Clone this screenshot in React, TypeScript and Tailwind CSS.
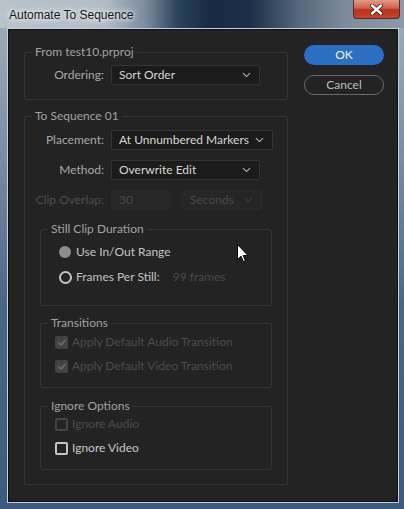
import React from "react";

const font = { fontFamily: 'Lato, "Open Sans", sans-serif' };

function Chevron({ dim }: { dim?: boolean }) {
  return (
    <svg width="9" height="6" viewBox="0 0 9 6" fill="none">
      <path d="M1 1.2 L4.5 4.6 L8 1.2" stroke={dim ? "#3e3e3e" : "#b8b8b8"} strokeWidth="1.1" />
    </svg>
  );
}

function Dropdown({ value, width, dim }: { value: string; width: string; dim?: boolean }) {
  return (
    <div
      className={`flex h-[20px] items-center justify-between whitespace-nowrap rounded-[2px] border pl-[7px] pr-[8px] ${width} ${
        dim ? "border-[#2b2b2b] bg-[#262626] text-[#4a4a4a]" : "border-[#343434] bg-[#1b1b1b] text-[#d6d6d6]"
      }`}
    >
      <span>{value}</span>
      <Chevron dim={dim} />
    </div>
  );
}

function Legend({ children }: { children: React.ReactNode }) {
  return <legend className="ml-[7px] h-4 px-[3px] leading-4 text-[#a2a2a2]">{children}</legend>;
}

function Checkbox({ checked, disabled, label }: { checked?: boolean; disabled?: boolean; label: string }) {
  return (
    <div className="flex h-6 items-center">
      <div
        className={`flex h-[13px] w-[13px] items-center justify-center rounded-[2px] ${
          checked ? "bg-[#434343]" : disabled ? "border-2 border-[#444]" : "border-2 border-[#c4c4c4]"
        }`}
      >
        {checked && (
          <svg width="10" height="9" viewBox="0 0 10 9" fill="none">
            <path d="M1.5 4.5 L4 7 L8.5 1.8" stroke="#6a6a6a" strokeWidth="1.8" />
          </svg>
        )}
      </div>
      <span className={`ml-[4px] ${disabled ? "text-[#4c4c4c]" : "text-[#c8c8c8]"}`}>{label}</span>
    </div>
  );
}

function Cursor() {
  return (
    <svg className="absolute left-[237px] top-[244px]" width="12" height="19" viewBox="0 0 12 19">
      <path d="M0.5 0.5 L0.5 15.5 L4 12.2 L6.3 17.6 L8.4 16.7 L6.2 11.5 L11 11.5 Z" fill="#fff" stroke="#000" strokeWidth="1" />
    </svg>
  );
}

export default function App() {
  return (
    <div
      className="relative h-[509px] w-[404px] overflow-hidden text-[12px]"
      style={{ ...font, background: "linear-gradient(180deg, #a3afba 0%, #7a8ea3 30%, #4a6686 60%, #3b5a7d 100%)" }}
    >
      {/* title bar */}
      <div
        className="flex h-[28px] items-center justify-between"
        style={{
          background:
            "linear-gradient(90deg, #b9c3cc 0%, #b2bcc6 26%, #7b8c9d 36%, #2c435c 44%, #172b43 52%, #1b2f46 62%, #55687c 74%, #7e8d9c 86%, #8b99a8 100%)",
        }}
      >
        <span
          className="ml-[9px] mt-[1px] text-[12px] text-[#101820]"
          style={{ fontFamily: '"Liberation Sans", Arial, sans-serif', textShadow: "0 0 8px #fff, 0 0 4px #fff" }}
        >
          Automate To Sequence
        </span>
        <div
          className="mb-[9px] mr-[4px] flex h-[19px] w-[47px] items-center justify-center self-start rounded-b-[4px] border border-t-0 border-[#5a2a22]"
          style={{ background: "linear-gradient(180deg, #e39a88 0%, #d0604a 45%, #b7321f 55%, #c4452e 100%)" }}
        >
          <svg width="13" height="11" viewBox="0 0 13 11">
            <path d="M2 1.5 L11 9.5 M11 1.5 L2 9.5" stroke="#3a1a14" strokeWidth="4" strokeLinecap="round" />
            <path d="M2 1.5 L11 9.5 M11 1.5 L2 9.5" stroke="#fff" strokeWidth="2.4" strokeLinecap="round" />
          </svg>
        </div>
      </div>

      {/* client area */}
      <div className="ml-[7px] mr-[5px] flex h-[475px] border border-[#c4d0dc] bg-[#232323]">
        <div className="flex w-full border border-[#101010] pl-[15px] pt-[14px]">
          {/* left column */}
          <div className="flex w-[264px] flex-col">
            <fieldset className="rounded-[2px] border border-[#363636]">
              <Legend>From test10.prproj</Legend>
              <div className="mt-[5px] flex items-center pb-[14px]">
                <span className="w-[79px] text-right text-[#a8a8a8]">Ordering:</span>
                <div className="ml-[7px]">
                  <Dropdown value="Sort Order" width="w-[149px]" />
                </div>
              </div>
            </fieldset>

            <fieldset className="mt-[8px] rounded-[2px] border border-[#363636]">
              <Legend>To Sequence 01</Legend>
              <div className="mt-[6px] flex flex-col gap-[10px]">
                <div className="flex items-center">
                  <span className="w-[79px] text-right text-[#a8a8a8]">Placement:</span>
                  <div className="ml-[7px]">
                    <Dropdown value="At Unnumbered Markers" width="w-[162px]" />
                  </div>
                </div>
                <div className="flex items-center">
                  <span className="w-[79px] text-right text-[#a8a8a8]">Method:</span>
                  <div className="ml-[7px]">
                    <Dropdown value="Overwrite Edit" width="w-[149px]" />
                  </div>
                </div>
                <div className="flex items-center">
                  <span className="w-[79px] text-right text-[#4e4e4e]">Clip Overlap:</span>
                  <div className="ml-[7px] flex h-[20px] w-[59px] items-center rounded-[2px] border border-[#2b2b2b] bg-[#262626] pl-[7px] text-[#4a4a4a]">
                    30
                  </div>
                  <div className="ml-[12px]">
                    <Dropdown value="Seconds" width="w-[80px]" dim />
                  </div>
                </div>
              </div>

              <div className="flex flex-col px-[15px] pb-[14px]">
                <fieldset className="mt-[11px] rounded-[2px] border border-[#363636]">
                  <Legend>Still Clip Duration</Legend>
                  <div className="mt-[3px] flex flex-col gap-[1px] pb-[16px] pl-[18px]">
                    <div className="flex h-6 items-center">
                      <div className="h-[12px] w-[12px] rounded-full bg-[#8c8c8c]" />
                      <span className="ml-[5px] text-[#c4c4c4]">Use In/Out Range</span>
                    </div>
                    <div className="flex h-6 items-center">
                      <div className="h-[13px] w-[13px] rounded-full border-2 border-[#c4c4c4]" />
                      <span className="ml-[4px] text-[#c4c4c4]">Frames Per Still:</span>
                      <span className="ml-[13px] text-[#4a4a4a]">99 frames</span>
                    </div>
                  </div>
                </fieldset>

                <fieldset className="mt-[9px] rounded-[2px] border border-[#363636]">
                  <Legend>Transitions</Legend>
                  <div className="-mt-[1px] flex flex-col pb-[9px] pl-[14px]">
                    <Checkbox checked disabled label="Apply Default Audio Transition" />
                    <Checkbox checked disabled label="Apply Default Video Transition" />
                  </div>
                </fieldset>

                <fieldset className="mt-[10px] rounded-[2px] border border-[#363636]">
                  <Legend>Ignore Options</Legend>
                  <div className="-mt-[2px] flex flex-col pb-[9px] pl-[14px]">
                    <Checkbox disabled label="Ignore Audio" />
                    <Checkbox label="Ignore Video" />
                  </div>
                </fieldset>
              </div>
            </fieldset>
          </div>

          {/* buttons */}
          <div className="ml-[16px] flex flex-col gap-[10px] pt-[1px]">
            <div className="flex h-[20px] w-[80px] items-center justify-center rounded-full bg-[#2a6fc2] text-[#f4f4f4]">
              OK
            </div>
            <div className="flex h-[20px] w-[80px] items-center justify-center rounded-full border border-[#6a6a6a] text-[#bdbdbd]">
              Cancel
            </div>
          </div>
        </div>
      </div>

      <Cursor />
    </div>
  );
}
